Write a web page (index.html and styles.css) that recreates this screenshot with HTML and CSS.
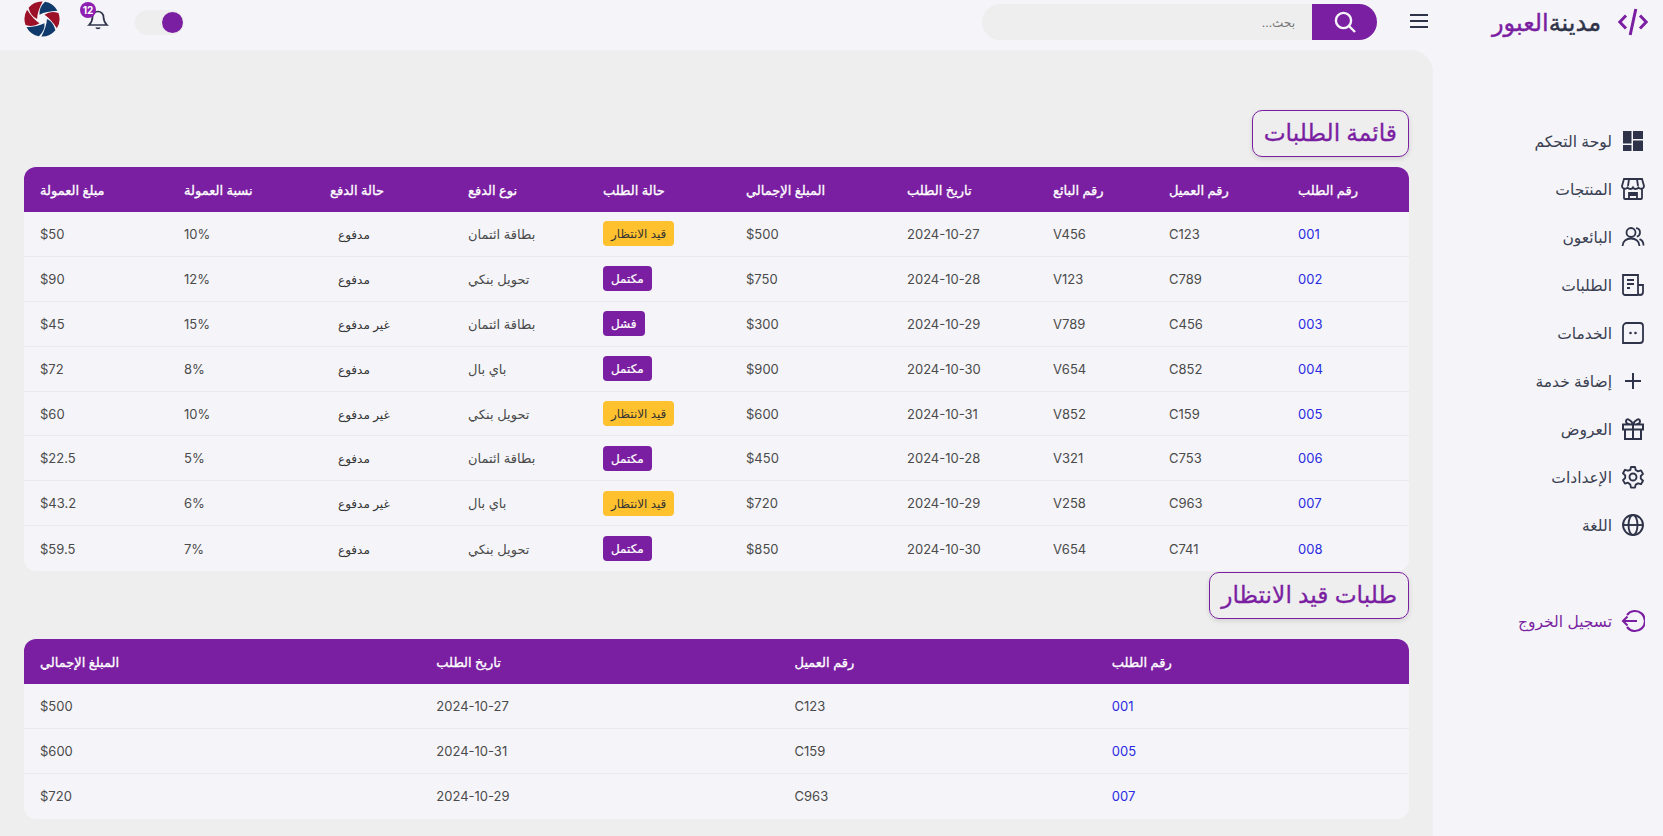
FILE: index.html
```html
<!DOCTYPE html>
<html lang="ar" dir="rtl">
<head>
    <meta charset="UTF-8">
    <meta name="viewport" content="width=device-width, initial-scale=1.0">
    <title>مدينة العبور - قائمة الطلبات</title>
    <link rel="stylesheet" href="styles.css">
</head>
<body>
    <header class="topbar">
        <div class="brand">
            <svg class="brand-icon" viewBox="0 0 30 28" fill="none" stroke="currentColor" stroke-width="3">
                <path d="M8 7.500 1.800 14 8 20.500M22 7.500 28.200 14 22 20.500M17.800 1 12.200 27"/>
            </svg>
            <span class="brand-name"><span class="brand-dark">مدينة</span>العبور</span>
        </div>
        <button class="menu-btn" type="button" aria-label="menu">
            <svg viewBox="0 0 18 14" width="18" height="14" fill="none" stroke="currentColor" stroke-width="2">
                <path d="M0 1h18M0 7h18M0 13h18"/>
            </svg>
        </button>
        <div class="search">
            <button class="search-btn" type="button" aria-label="search">
                <svg viewBox="0 0 24 24" width="24" height="24" fill="none" stroke="currentColor" stroke-width="2.400">
                    <circle cx="10.500" cy="10.500" r="7.600"/>
                    <path d="m16 16 6 6"/>
                </svg>
            </button>
            <span class="search-text">بحث...</span>
        </div>
        <div class="top-actions">
            <div class="toggle"><span class="toggle-knob"></span></div>
            <div class="bell">
                <svg viewBox="0 0 24 24" width="24" height="24" fill="none" stroke="currentColor" stroke-width="1.700">
                    <path d="M6.500 10a5.500 5.500 0 0 1 11 0c0 4.500 1.500 6 3.500 8H3c2-2 3.500-3.500 3.500-8ZM10 20.500c.6 1.300 3.400 1.300 4 0"/>
                </svg>
                <span class="badge">12</span>
            </div>
            <svg class="avatar" viewBox="-18 -18 36 36">
                <g transform="rotate(10)">
                    <path fill="#0f3a6b" d="M0-17.500A17.500 17.500 0 0 1 13.800-10.800Q3-8.500-3.200-3.800-5.100-10.900 0-17.500Z"/>
                    <path fill="#9c1128" transform="rotate(60)" d="M0-17.500A17.500 17.500 0 0 1 13.800-10.800Q3-8.500-3.200-3.800-5.100-10.900 0-17.500Z"/>
                    <path fill="#0f3a6b" transform="rotate(120)" d="M0-17.500A17.500 17.500 0 0 1 13.800-10.800Q3-8.500-3.200-3.800-5.100-10.900 0-17.500Z"/>
                    <path fill="#0f3a6b" transform="rotate(180)" d="M0-17.500A17.500 17.500 0 0 1 13.800-10.800Q3-8.500-3.200-3.800-5.100-10.900 0-17.500Z"/>
                    <path fill="#9c1128" transform="rotate(240)" d="M0-17.500A17.500 17.500 0 0 1 13.800-10.800Q3-8.500-3.200-3.800-5.100-10.900 0-17.500Z"/>
                    <path fill="#9c1128" transform="rotate(300)" d="M0-17.500A17.500 17.500 0 0 1 13.800-10.800Q3-8.500-3.200-3.800-5.100-10.900 0-17.500Z"/>
                </g>
            </svg>
        </div>
    </header>

    <div class="layout">
        <nav class="sidebar">
            <a class="nav-item" href="#">
                <svg class="nav-icon" viewBox="0 0 24 24" fill="currentColor"><path d="M2 2h8.500v12.500H2zM12 2h10v8H12zM12 11.500h10V22H12zM2 16h8.500v6H2z"/></svg>
                <span>لوحة التحكم</span>
            </a>
            <a class="nav-item" href="#">
                <svg class="nav-icon" viewBox="0 0 24 24" fill="none" stroke="currentColor" stroke-width="1.800"><path d="M3 2h18l2 7c0 3-4 3.500-5.500 1.500C16 12.500 13 12.500 12 10.500c-1 2-4 2-5.500 0C5 12.500 1 12 1 9ZM3 12v9a1 1 0 0 0 1 1h16a1 1 0 0 0 1-1v-9M8 2 7 9M16 2l1 7M8 22v-6h8v6M8 18h8"/></svg>
                <span>المنتجات</span>
            </a>
            <a class="nav-item" href="#">
                <svg class="nav-icon" viewBox="0 0 24 24" fill="none" stroke="currentColor" stroke-width="1.800"><circle cx="10" cy="7.500" r="4.500"/><path d="M1.500 21c0-4.700 3.800-7.500 8.500-7.500s8.500 2.800 8.500 7.500M15 3.200c2.400.2 4 2 4 4.300 0 2-1.300 3.700-3.200 4.200M18.500 14.200c2.500.9 4 3.500 4 6.300"/></svg>
                <span>البائعون</span>
            </a>
            <a class="nav-item" href="#">
                <svg class="nav-icon" viewBox="0 0 24 24" fill="none" stroke="currentColor" stroke-width="1.800"><path d="M17 22H4a2 2 0 0 1-2-2V2h15v18a2 2 0 0 0 2 2 3 3 0 0 0 3-3v-7h-5M6 7h7M6 11h7M6 15h3M6 18h0"/></svg>
                <span>الطلبات</span>
            </a>
            <a class="nav-item" href="#">
                <svg class="nav-icon" viewBox="0 0 24 24" fill="none" stroke="currentColor" stroke-width="1.800"><path d="M6 2h13a3 3 0 0 1 3 3v14a3 3 0 0 1-3 3H2V6a4 4 0 0 1 4-4Z"/><circle cx="9.500" cy="12" r="1.300" fill="currentColor" stroke="none"/><circle cx="14.500" cy="12" r="1.300" fill="currentColor" stroke="none"/></svg>
                <span>الخدمات</span>
            </a>
            <a class="nav-item" href="#">
                <svg class="nav-icon" viewBox="0 0 24 24" fill="none" stroke="currentColor" stroke-width="2"><path d="M12 4v16M4 12h16"/></svg>
                <span>إضافة خدمة</span>
            </a>
            <a class="nav-item" href="#">
                <svg class="nav-icon" viewBox="0 0 24 24" fill="none" stroke="currentColor" stroke-width="2"><path d="M2 7.500h20v5H2zM4 12.500V22h16v-9.500M12 7.500V22M12 7.500C10 2.500 5 .5 5 4.500c0 2 3 3 7 3ZM12 7.500c2-5 7-7 7-3 0 2-3 3-7 3Z"/></svg>
                <span>العروض</span>
            </a>
            <a class="nav-item" href="#">
                <svg class="nav-icon" viewBox="0 0 24 24" fill="none" stroke="currentColor" stroke-width="1.900"><circle cx="12" cy="12" r="3.500"/><path d="M10 2h4l.7 3 2.300 1.300 3-.9 2 3.500-2.200 2.100v2.600l2.200 2.100-2 3.500-3-.9-2.300 1.300-.7 3h-4l-.7-3L7 17.700l-3 .9-2-3.500 2.200-2.100v-2.600L2 8.300l2-3.500 3 .9L9.300 5Z" stroke-linejoin="round"/></svg>
                <span>الإعدادات</span>
            </a>
            <a class="nav-item" href="#">
                <svg class="nav-icon" viewBox="0 0 24 24" fill="none" stroke="currentColor" stroke-width="1.900"><circle cx="12" cy="12" r="10"/><ellipse cx="12" cy="12" rx="4.500" ry="10"/><path d="M2 12h20"/></svg>
                <span>اللغة</span>
            </a>
            <a class="nav-item logout" href="#">
                <svg class="nav-icon" viewBox="0 0 24 24" fill="none" stroke="currentColor" stroke-width="2.100"><path d="M6 6a10 10 0 1 1 0 12M2 12h14M6.500 7.500 2 12l4.500 4.500"/></svg>
                <span>تسجيل الخروج</span>
            </a>
        </nav>

        <main class="content">
            <h2 class="section-title">قائمة الطلبات</h2>
            <table class="orders orders-full">
                <colgroup>
                    <col class="c127"><col class="c129"><col class="c116"><col class="c146"><col class="c161">
                    <col class="c143"><col class="c135"><col class="c138"><col class="c146"><col class="c144">
                </colgroup>
                <thead>
                    <tr>
                        <th>رقم الطلب</th><th>رقم العميل</th><th>رقم البائع</th><th>تاريخ الطلب</th><th>المبلغ الإجمالي</th>
                        <th>حالة الطلب</th><th>نوع الدفع</th><th>حالة الدفع</th><th>نسبة العمولة</th><th>مبلغ العمولة</th>
                    </tr>
                </thead>
                <tbody>
                    <tr>
                        <td><a href="#">001</a></td><td>C123</td><td>V456</td><td>2024-10-27</td><td>$500</td>
                        <td><span class="status pending">قيد الانتظار</span></td><td>بطاقة ائتمان</td><td><span class="pay">مدفوع</span></td><td>10%</td><td>$50</td>
                    </tr>
                    <tr>
                        <td><a href="#">002</a></td><td>C789</td><td>V123</td><td>2024-10-28</td><td>$750</td>
                        <td><span class="status done">مكتمل</span></td><td>تحويل بنكي</td><td><span class="pay">مدفوع</span></td><td>12%</td><td>$90</td>
                    </tr>
                    <tr>
                        <td><a href="#">003</a></td><td>C456</td><td>V789</td><td>2024-10-29</td><td>$300</td>
                        <td><span class="status done">فشل</span></td><td>بطاقة ائتمان</td><td><span class="pay">غير مدفوع</span></td><td>15%</td><td>$45</td>
                    </tr>
                    <tr>
                        <td><a href="#">004</a></td><td>C852</td><td>V654</td><td>2024-10-30</td><td>$900</td>
                        <td><span class="status done">مكتمل</span></td><td>باي بال</td><td><span class="pay">مدفوع</span></td><td>8%</td><td>$72</td>
                    </tr>
                    <tr>
                        <td><a href="#">005</a></td><td>C159</td><td>V852</td><td>2024-10-31</td><td>$600</td>
                        <td><span class="status pending">قيد الانتظار</span></td><td>تحويل بنكي</td><td><span class="pay">غير مدفوع</span></td><td>10%</td><td>$60</td>
                    </tr>
                    <tr>
                        <td><a href="#">006</a></td><td>C753</td><td>V321</td><td>2024-10-28</td><td>$450</td>
                        <td><span class="status done">مكتمل</span></td><td>بطاقة ائتمان</td><td><span class="pay">مدفوع</span></td><td>5%</td><td>$22.5</td>
                    </tr>
                    <tr>
                        <td><a href="#">007</a></td><td>C963</td><td>V258</td><td>2024-10-29</td><td>$720</td>
                        <td><span class="status pending">قيد الانتظار</span></td><td>باي بال</td><td><span class="pay">غير مدفوع</span></td><td>6%</td><td>$43.2</td>
                    </tr>
                    <tr>
                        <td><a href="#">008</a></td><td>C741</td><td>V654</td><td>2024-10-30</td><td>$850</td>
                        <td><span class="status done">مكتمل</span></td><td>تحويل بنكي</td><td><span class="pay">مدفوع</span></td><td>7%</td><td>$59.5</td>
                    </tr>
                </tbody>
            </table>

            <h2 class="section-title second">طلبات قيد الانتظار</h2>
            <table class="orders orders-short">
                <colgroup>
                    <col class="c313"><col class="c317"><col class="c358"><col class="c396">
                </colgroup>
                <thead>
                    <tr><th>رقم الطلب</th><th>رقم العميل</th><th>تاريخ الطلب</th><th>المبلغ الإجمالي</th></tr>
                </thead>
                <tbody>
                    <tr><td><a href="#">001</a></td><td>C123</td><td>2024-10-27</td><td>$500</td></tr>
                    <tr><td><a href="#">005</a></td><td>C159</td><td>2024-10-31</td><td>$600</td></tr>
                    <tr><td><a href="#">007</a></td><td>C963</td><td>2024-10-29</td><td>$720</td></tr>
                </tbody>
            </table>
        </main>
    </div>
</body>
</html>
```

FILE: styles.css
```css
* {
    box-sizing: border-box;
}
html, body {
    height: 100%;
}
body {
    margin: 0;
    font-family: Inter, "DejaVu Sans", sans-serif;
    background-color: #f5f5f9;
    color: #4a4a4a;
    overflow: hidden;
}
a {
    text-decoration: none;
    color: inherit;
}
button {
    border: 0;
    padding: 0;
    background: none;
    cursor: pointer;
}

/* top bar */
.topbar {
    height: 50px;
    display: flex;
    align-items: flex-start;
}
.brand {
    width: 235px;
    height: 44px;
    display: flex;
    align-items: center;
    gap: 17px;
    padding-right: 15px;
}
.brand-icon {
    width: 30px;
    height: 28px;
    color: #7b1fa2;
}
.brand-name {
    font-size: 24px;
    font-weight: 500;
    -webkit-text-stroke: 0.4px currentColor;
    color: #7b1fa2;
}
.brand-dark {
    color: #2f3349;
}
.menu-btn {
    margin-top: 14px;
    width: 18px;
    height: 14px;
    color: #2f3349;
}
.search {
    width: 395px;
    height: 36px;
    margin-top: 4px;
    margin-right: 33px;
    display: flex;
    align-items: center;
    border-radius: 18px;
    background-color: #eee;
    overflow: hidden;
}
.search-btn {
    width: 65px;
    height: 36px;
    display: flex;
    align-items: center;
    justify-content: center;
    background-color: #7b1fa2;
    color: #f5f5f9;
}
.search-text {
    margin-right: 17px;
    font-size: 12px;
    color: #777;
}
.top-actions {
    margin-right: auto;
    margin-left: 24px;
    display: flex;
    align-items: flex-start;
}
.toggle {
    width: 49px;
    height: 25px;
    margin-top: 10px;
    margin-left: 25px;
    padding: 2px 1px;
    border-radius: 13px;
    background-color: #eee;
    display: flex;
}
.toggle-knob {
    width: 21px;
    height: 21px;
    border-radius: 50%;
    background-color: #7b1fa2;
}
.bell {
    position: relative;
    width: 24px;
    height: 24px;
    margin-top: 7px;
    margin-left: 26px;
    color: #2f3349;
}
.badge {
    position: absolute;
    top: -5px;
    right: 14px;
    width: 16px;
    height: 16px;
    border-radius: 50%;
    background-color: #8e1fb0;
    color: #fff;
    font-size: 10px;
    font-weight: 700;
    line-height: 16px;
    text-align: center;
}
.avatar {
    width: 36px;
    height: 36px;
    margin-top: 1px;
}

/* page */
.layout {
    display: flex;
    height: calc(100vh - 50px);
}
.sidebar {
    width: 230px;
    flex-shrink: 0;
    padding: 67px 18px 0 0;
    display: flex;
    flex-direction: column;
}
.nav-item {
    height: 48px;
    display: flex;
    align-items: center;
    gap: 9px;
    font-size: 15.500px;
    color: #3a3f52;
}
.nav-icon {
    width: 24px;
    height: 24px;
    flex-shrink: 0;
    color: #2f3349;
}
.logout {
    margin-top: 48px;
    color: #7b1fa2;
}
.logout .nav-icon {
    color: #7b1fa2;
}
.content {
    flex: 1;
    padding: 60px 24px 0;
    background-color: #eee;
    border-top-right-radius: 22px;
}
.section-title {
    width: fit-content;
    height: 47px;
    margin: 0 0 10px;
    padding: 0 11px;
    border: 1px solid #7b1fa2;
    border-radius: 10px;
    box-shadow: 0 2px 5px rgba(0, 0, 0, 0.12);
    font-size: 23.300px;
    font-weight: 500;
    -webkit-text-stroke: 0.3px currentColor;
    line-height: 44px;
    color: #7b1fa2;
}
.section-title.second {
    margin: 1px 0 20px;
}

/* tables */
.orders {
    width: 100%;
    table-layout: fixed;
    border-collapse: separate;
    border-spacing: 0;
    background-color: #f5f5f9;
    border-radius: 12px;
    overflow: hidden;
    font-size: 13px;
}
.orders th {
    height: 45px;
    padding: 0 16px;
    background-color: #7b1fa2;
    color: #fff;
    font-weight: 500;
    font-size: 13px;
    -webkit-text-stroke: 0.3px currentColor;
    text-align: left;
}
.orders td {
    height: 44.900px;
    padding: 0 16px;
    border-bottom: 1px solid #eaeaea;
    text-align: left;
}
.orders tbody tr:last-child td {
    border-bottom: 0;
}
.orders td a {
    color: #2a2ae0;
}
.status {
    display: inline-block;
    padding: 3px 8px;
    border-radius: 4px;
    font-size: 12px;
    font-weight: 500;
    line-height: 19px;
}
.status.pending {
    background-color: #ffc12d;
    color: #333;
}
.status.done {
    background-color: #7b1fa2;
    color: #fff;
    -webkit-text-stroke: 0.2px currentColor;
}
.pay {
    padding-left: 8px;
    font-size: 12px;
    color: #333;
}
.c127 { width: 127px; }
.c129 { width: 129px; }
.c116 { width: 116px; }
.c146 { width: 146px; }
.c161 { width: 161px; }
.c143 { width: 143px; }
.c135 { width: 135px; }
.c138 { width: 138px; }
.c144 { width: 144px; }
.c313 { width: 313px; }
.c317 { width: 317px; }
.c358 { width: 358px; }
.c396 { width: 396px; }
```
